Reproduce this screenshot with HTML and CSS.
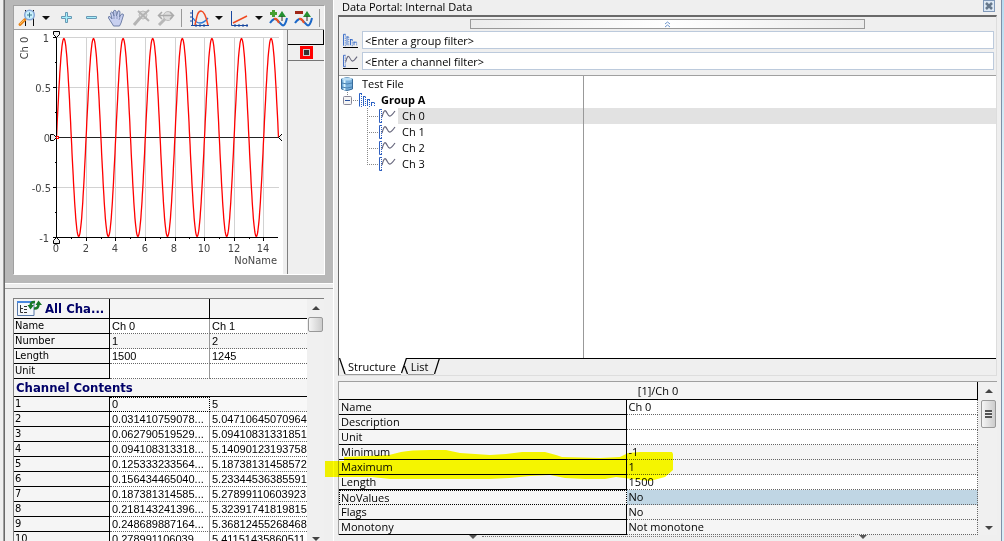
FILE: index.html
```html
<!DOCTYPE html>
<html lang="en">
<head>
<meta charset="utf-8">
<title>Data Portal: Internal Data</title>
<link rel="stylesheet" href="styles.css">
</head>
<body>
<svg class="defs" aria-hidden="true">
  <symbol id="channel" viewBox="0 0 17 16">
    <path d="M3 1.5H.5V14.500H3" fill="none" stroke="#3060c0"/>
    <path d="M2.500 3V14" stroke="#3060c0" stroke-dasharray="1 1"/>
    <path d="M3 9C5 2 6 1 8 5S11 10 16 3" fill="none" stroke="#66667c" stroke-width="1.200"/>
  </symbol>
  <symbol id="group" viewBox="0 0 17 16">
    <path d="M3 1.500H.5V14.500M4 4.500H6.500M8 7.500H11M12 10.500H15.500M4.500 4V14M8.500 7V14M12.500 10V14" fill="none" stroke="#2860c4"/>
    <path d="M2.500 2V15M6.500 5V15M10.500 8V15M15.500 11V15" stroke="#2860c4" stroke-dasharray="1 1"/>
  </symbol>
</svg>
<div class="app">
  <section class="left">
    <div class="chart-zone">
      <div class="chart-card">
        <div class="toolbar">
          <button class="tool" aria-label="Zoom"><svg viewBox="14 6 25 22"><path d="M25.500 9V25M33.500 9V25" stroke="#111"/><path d="M20 23.500L25 18.500" stroke="#e88418" stroke-width="3" stroke-linecap="round"/><path d="M20 23L24 19" stroke="#ffc060"/><circle cx="29.500" cy="14" r="4.800" fill="#c8f0fc" stroke="#88a8d8" stroke-width="1.500"/><path d="M27 14H32M29.500 11.500V16.500" stroke="#3c7890"/></svg></button>
          <button class="caret" aria-label="Zoom options"></button>
          <button class="tool" aria-label="Zoom in"><svg viewBox="54 6 25 22"><path d="M65.500 11.500h2v4h4v2h-4v4h-2v-4h-4v-2h4z" fill="#a4f0fc" stroke="#6898b4"/></svg></button>
          <button class="tool" aria-label="Zoom out"><svg viewBox="79 6 25 22"><path d="M86.500 15.500h10v2h-10z" fill="#a4f0fc" stroke="#6898b4"/></svg></button>
          <button class="tool" aria-label="Pan"><svg viewBox="104 6 25 22"><path d="M113 24L108.500 17Q108 15 110 15.500L112 18L110.500 12Q111.500 10 113 12L114 15L113.500 10Q115 8.500 116 10L116.500 15L118 10Q119.500 9 120 11L119.500 16L121.500 13Q123.500 12.500 123.500 14L121 22L119.500 25H113.500Z" fill="#c8d0f0" stroke="#7080a8"/><path d="M114 15V18M117 15V18M120 16L119 19" stroke="#8c98c0"/></svg></button>
          <button class="tool" aria-label="Clear zoom"><svg viewBox="129 6 25 22"><path d="M134 24L140 17" stroke="#b4b4b4" stroke-width="3"/><circle cx="143" cy="14" r="4" fill="#ddd" stroke="#bbb"/><path d="M138 10L149 20M149 9L138 19" stroke="#b4b4b4" stroke-width="2"/></svg></button>
          <button class="tool" aria-label="Fit"><svg viewBox="154 6 25 22"><path d="M159 24L165 18" stroke="#b8b8b8" stroke-width="3"/><circle cx="168" cy="15" r="4.500" fill="#ddd" stroke="#bbb"/><path d="M159 14.500H173M162 11L158.500 14.500L162 18M170 11L173.500 14.500L170 18" fill="none" stroke="#aaa" stroke-width="1.500"/></svg></button>
          <span class="sep"></span>
          <button class="tool" aria-label="Curve"><svg viewBox="187 6 25 22"><path d="M191 24.500H209M192.500 9V25M196 23v3M200 23v3M204 23v3M190 12h3M190 16h3M190 20h3" stroke="#1848a0"/><path d="M193 17Q196 22 200 22T208 17" fill="none" stroke="#2878d8" stroke-width="1.300"/><path d="M195 24C197 14 198 10 201 10S206 15 208 24" fill="none" stroke="#f04820" stroke-width="1.500"/></svg></button>
          <button class="caret gap" aria-label="Curve options"></button>
          <button class="tool" aria-label="Axes"><svg viewBox="227 6 25 22"><path d="M231.500 10V24.500H248M235 23v3M239 23v3M243 23v3M247 23v3" fill="none" stroke="#1848a0"/><path d="M233 22L247 15" stroke="#f04820" stroke-width="1.500"/></svg></button>
          <button class="caret gap" aria-label="Axes options"></button>
          <button class="tool" aria-label="Add curve"><svg viewBox="267 6 25 22"><path d="M270 22Q274 16 277 19T282 24Q285 26 287 17" fill="none" stroke="#1c68c8" stroke-width="2"/><path d="M274 18Q277 17 279 22" fill="none" stroke="#f05020" stroke-width="2"/><path d="M278 16L282 10L286 16Z" fill="#249030"/><path d="M282 15V20" stroke="#333"/><path d="M273.500 9V16M270 12.500H277" stroke="#48a030" stroke-width="3"/></svg></button>
          <button class="tool" aria-label="Remove curve"><svg viewBox="292 6 25 22"><path d="M295 22Q299 16 302 19T307 24Q310 26 312 17" fill="none" stroke="#1c68c8" stroke-width="2"/><path d="M299 18Q302 17 304 22" fill="none" stroke="#f05020" stroke-width="2"/><path d="M303 16L307 10L311 16Z" fill="#249030"/><path d="M307 15V20" stroke="#333"/><path d="M295 11.500H303" stroke="#a02818" stroke-width="3"/></svg></button>
          <span class="sep"></span>
        </div>
        <div class="chart-body">
          <svg class="plot" id="plot" viewBox="14 30 269 244" role="img" aria-label="Ch 0 sine curve">
            <path d="M57 37.500H279M57 87.500H279M57 187.500H279M86.500 38V237M115.500 38V237M145.500 38V237M175.500 38V237M204.500 38V237M234.500 38V237M263.500 38V237" stroke="#d2d2d2" shape-rendering="crispEdges"/>
            <path d="M56 137.500H279" stroke="#222" shape-rendering="crispEdges"/>
            <polyline id="curve" fill="none" stroke="#f00" stroke-width="1.300"/>
            <path d="M56.500 37V238M53 37.500H57M53 87.500H57M53 137.500H57M53 187.500H57M53 237.500H278M55 62.500H57M55 112.500H57M55 162.500H57M55 212.500H57M86.500 238V241M115.500 238V241M145.500 238V241M175.500 238V241M204.500 238V241M234.500 238V241M263.500 238V241M71.500 238V239M101.500 238V239M130.500 238V239M160.500 238V239M189.500 238V239M219.500 238V239M249.500 238V239" stroke="#000" shape-rendering="crispEdges"/>
            <path d="M53.500 31.500H59.500V34.500L56.500 37.500L53.500 34.500ZM53.500 243.500H59.500V240.500L56.500 237.500L53.500 240.500ZM50.500 134.500H53.500L56.500 137.500L53.500 140.500H50.500ZM282 134L278.500 137.500L282 141" fill="#eee" stroke="#000"/>
            <rect x="56.500" y="136.500" width="2" height="2" fill="#fff" stroke="#f00"/>
            <g class="end"><text x="49" y="42">1</text><text x="51" y="92">0.5</text><text x="50" y="142">0</text><text x="51" y="192">-0.5</text><text x="49" y="242">-1</text><text x="277" y="264">NoName</text></g>
            <g class="mid"><text x="56" y="252">0</text><text x="86" y="252">2</text><text x="115" y="252">4</text><text x="145" y="252">6</text><text x="174" y="252">8</text><text x="204" y="252">10</text><text x="234" y="252">12</text><text x="263" y="252">14</text><text transform="translate(28 48) rotate(-90)">Ch 0</text></g>
          </svg>
          <div class="legend"><div class="legend-head"></div><div class="legend-row"><span class="swatch"></span></div></div>
        </div>
      </div>
    </div>
    <div class="grid-zone">
      <div class="grid-frame">
        <table class="channels">
          <colgroup><col class="c1"><col class="c2"><col></colgroup>
          <tbody>
          <tr class="head"><th><span class="title"><svg width="26" height="18" viewBox="16 299 26 18"><path d="M17.500 301.500H34V315.500H17.500Z" fill="#f4f8fc" stroke="#5878a8"/><path d="M17 302H34" stroke="#4888e0" stroke-width="2"/><path d="M20.500 305V312.500H23M20.500 308.500H23M24 306.500H27M24 309.500H27M24 312.500H27" fill="none" stroke="#333"/><path d="M30.500 307Q30 301.500 35 302" fill="none" stroke="#187828" stroke-width="2.500"/><path d="M27.500 305H34L30.500 309.500ZM35.500 305H42L38.500 300.500Z" fill="#187828"/><path d="M38.500 303Q39 309 34 308.500" fill="none" stroke="#187828" stroke-width="2.500"/></svg>All Cha...</span></th><th></th><th></th></tr>
          <tr><th>Name</th><td>Ch 0</td><td>Ch 1</td></tr>
          <tr class="ro"><th>Number</th><td>1</td><td>2</td></tr>
          <tr><th>Length</th><td>1500</td><td>1245</td></tr>
          <tr><th>Unit</th><td></td><td></td></tr>
          <tr class="section"><th colspan="3">Channel Contents</th></tr>
          <tr class="focus"><th>1</th><td>0</td><td>5</td></tr>
          <tr><th>2</th><td>0.031410759078...</td><td>5.04710645070964</td></tr>
          <tr><th>3</th><td>0.062790519529...</td><td>5.09410831331851</td></tr>
          <tr><th>4</th><td>0.094108313318...</td><td>5.14090123193758</td></tr>
          <tr><th>5</th><td>0.125333233564...</td><td>5.18738131458572</td></tr>
          <tr><th>6</th><td>0.156434465040...</td><td>5.23344536385591</td></tr>
          <tr><th>7</th><td>0.187381314585...</td><td>5.27899110603923</td></tr>
          <tr><th>8</th><td>0.218143241396...</td><td>5.32391741819815</td></tr>
          <tr><th>9</th><td>0.248689887164...</td><td>5.36812455268468</td></tr>
          <tr><th>10</th><td>0.278991106039...</td><td>5.41151435860511</td></tr>
          </tbody>
        </table>
        <div class="scroll"><span class="up"></span><span class="thumb small"></span><span class="down"></span></div>
      </div>
    </div>
  </section>

  <section class="portal">
    <header class="portal-title"><span>Data Portal: Internal Data</span><button class="close" aria-label="Close"><svg width="12" height="12" viewBox="0 0 12 12"><path d="M3 3L9 9M9 3L3 9" stroke="#66788c" stroke-width="2.500"/></svg></button></header>
    <div class="browser">
      <button class="collapse" aria-label="Collapse filters"><svg width="7" height="7" viewBox="0 0 7 7"><path d="M1 3L3.500 1L6 3M1 6L3.500 4L6 6" fill="none" stroke="#6c94cc"/></svg></button>
      <div class="filters">
        <label class="filter"><span class="ficon"><svg width="15" height="14"><use href="#group"/></svg></span><input aria-label="Group filter" value="&lt;Enter a group filter&gt;"></label>
        <label class="filter"><span class="ficon"><svg width="15" height="14"><use href="#channel"/></svg></span><input aria-label="Channel filter" value="&lt;Enter a channel filter&gt;"></label>
      </div>
      <div class="tree-area">
        <ul class="tree">
          <li><svg width="23" height="16" viewBox="339 76 23 16"><path d="M341.500 79V89Q347 92 352.500 89V79Q347 76 341.500 79Z" fill="#78b0dc" stroke="#386c9c"/><path d="M344.500 80V90" stroke="#d8f4ff" stroke-width="2"/><ellipse cx="347" cy="79" rx="5" ry="1.500" fill="#b8dcf4"/><path d="M342 83Q347 85 352 83M342 87Q347 89 352 87" fill="none" stroke="#4880b0"/></svg>Test File</li>
          <li class="bold"><svg width="42" height="16" viewBox="339 92 42 16"><path d="M347.500 92V96M353 100.500H358" stroke="#888" stroke-dasharray="1 1"/><rect x="343.500" y="96.500" width="8" height="8" rx="1" fill="#f4f4f4" stroke="#889"/><path d="M345 100.500H350" stroke="#2850a0"/><use href="#group" x="359" y="92" width="17" height="16"/></svg>Group A</li>
          <li class="leaf"><svg width="31" height="16"><path d="M.5 0V16M0 8.500H12" stroke="#888" stroke-dasharray="1 1"/><use href="#channel" x="12" y="0" width="17" height="16"/></svg><span class="picked">Ch 0</span></li>
          <li class="leaf"><svg width="31" height="16"><path d="M.5 0V16M0 8.500H12" stroke="#888" stroke-dasharray="1 1"/><use href="#channel" x="12" y="0" width="17" height="16"/></svg><span>Ch 1</span></li>
          <li class="leaf"><svg width="31" height="16"><path d="M.5 0V16M0 8.500H12" stroke="#888" stroke-dasharray="1 1"/><use href="#channel" x="12" y="0" width="17" height="16"/></svg><span>Ch 2</span></li>
          <li class="leaf"><svg width="31" height="16"><path d="M.5 0V9M0 8.500H12" stroke="#888" stroke-dasharray="1 1"/><use href="#channel" x="12" y="0" width="17" height="16"/></svg><span>Ch 3</span></li>
        </ul>
        <span class="divider"></span>
      </div>
      <div class="tabs">
        <svg width="8" height="17"><path d="M0 0H8V17H6Z" fill="#fff"/><path d="M.5 0L6 16" stroke="#000" stroke-width="1.200"/><path d="M6 16.500H8" stroke="#999"/></svg>
        <button class="tab on">Structure</button>
        <svg width="7" height="17"><path d="M0 0H5L0 16Z" fill="#fff"/><path d="M5 .5H7M5.500 0L.5 15M3.500 8L6.500 16" stroke="#000" stroke-width="1.200"/></svg>
        <button class="tab">List</button>
        <svg width="6" height="17"><path d="M0 .5H6M5.500 0L.5 16" stroke="#000" stroke-width="1.200"/></svg>
        <span class="rest"></span>
      </div>
    </div>
    <div class="props-frame">
      <table class="props">
        <colgroup><col class="pname"><col></colgroup>
        <thead><tr><th colspan="2">[1]/Ch 0</th></tr></thead>
        <tbody>
        <tr><th>Name</th><td>Ch 0</td></tr>
        <tr><th>Description</th><td></td></tr>
        <tr><th>Unit</th><td></td></tr>
        <tr class="ro"><th>Minimum</th><td>-1</td></tr>
        <tr class="ro"><th>Maximum</th><td>1</td></tr>
        <tr><th>Length</th><td>1500</td></tr>
        <tr class="sel"><th>NoValues</th><td>No</td></tr>
        <tr class="ro"><th>Flags</th><td>No</td></tr>
        <tr class="ro"><th>Monotony</th><td>Not monotone</td></tr>
        </tbody>
      </table>
      <div class="scroll"><span class="up"></span><span class="thumb grip"></span><span class="down"></span></div>
      <svg class="marker" viewBox="325 449 348 33" width="348" height="33" aria-hidden="true"><path d="M325 461H344V457L389 455L401 452Q410 450 430 450H446L460 453L490 455L506 454L522 452H545L556 455L562 457L600 458L620 457L628 453L640 452H672L673 454V470L665 477L650 481L640 480L616 477L605 479H585L565 478L550 475L530 476L510 478L490 479H390L372 477H325Z" fill="#ffff00"/></svg>
    </div>
    <footer class="split"><span class="arrow"></span><span class="dots"></span><span class="arrow"></span></footer>
  </section>
  <div class="edge"></div>
</div>
<script src="chart.js"></script>
</body>
</html>
```
FILE: chart.js
```js
// Ch 0 is a sine with a period of 2 over the range 0 to 15.
const points = [];
for (let i = 0; i <= 600; i++) {
  const t = i / 40;
  points.push((56.5 + t * 14.8).toFixed(1) + "," + (137.5 - 99 * Math.sin(Math.PI * t)).toFixed(1));
}
document.getElementById("curve").setAttribute("points", points.join(" "));
```
FILE: styles.css
```css
* { box-sizing: border-box; }
body { margin: 0; background: #efefef; color: #000; font: 11px/14px "DejaVu Sans Condensed", "DejaVu Sans", sans-serif; overflow: hidden; }
button { border: 0; margin: 0; padding: 0; background: none; font: inherit; color: inherit; }
svg { display: block; flex: none; }
.defs { position: absolute; width: 0; height: 0; }
.app { display: grid; grid-template-columns: 333px minmax(0, 1fr) 3px; height: 100vh; }

.left { display: flex; flex-direction: column; min-height: 0; margin-left: 3px; border-left: 1px solid #a0a0a0; box-shadow: inset 1px 0 #696969; padding-left: 1px; }
.chart-zone { background: #b8b8b8; padding: 5px 8px 8px; border-bottom: 1px solid #fff; }
.chart-card { border: 1px solid #a0a0a0; border-right-color: #fff; border-bottom-color: #fff; background: #efefef; }
.toolbar { display: flex; align-items: center; height: 24px; border-bottom: 1px solid #a0a0a0; }
.tool { width: 25px; height: 22px; flex: none; }
.tool svg { width: 25px; height: 22px; }
.caret { width: 13px; height: 22px; margin-right: 2px; flex: none; display: flex; align-items: center; justify-content: center; }
.caret::before { content: ""; border: 4px solid transparent; border-top-color: #111; border-bottom: 0; }
.sep { width: 1px; height: 18px; background: #999; margin: 0 5px 0 2px; flex: none; }
.chart-body { display: flex; }
.plot { flex: 1; min-width: 0; background: #fff; }
.plot text { fill: #444; }
.end { text-anchor: end; }
.mid { text-anchor: middle; }
.legend { width: 37px; margin-left: 4px; border-left: 1px solid #808080; flex: none; }
.legend-head { height: 15px; border-right: 1px solid #000; border-bottom: 1px solid #000; }
.legend-row { height: 16px; border-bottom: 1px solid #777; display: flex; align-items: center; justify-content: center; }
.swatch { width: 13px; height: 13px; background: #333; border: 3px solid #f00; outline: 1px solid #ccc; outline-offset: -4px; }

.grid-zone { flex: 1; min-height: 0; margin-top: 4px; border-top: 1px solid #a0a0a0; padding: 9px 9px 0 8px; }
.grid-frame { display: flex; height: 100%; overflow: hidden; border-top: 1px solid #808080; border-left: 1px solid #808080; }
table { border-collapse: separate; border-spacing: 0; table-layout: fixed; }
th, td { text-align: left; font-weight: normal; padding: 0 2px; height: 15px; line-height: 14px; white-space: nowrap; overflow: hidden; }
th { background: #f5f5f5; border-bottom: 1px solid #000; border-right: 1px solid #000; padding-left: 1px; }
td { background: #fff; border-bottom: 1px dotted #666; }
.ro td { background: #f5f5f5; }
.channels { width: 293px; align-self: flex-start; }
.c1 { width: 96px; }
.c2 { width: 100px; }
.channels td { font-family: "Liberation Sans", sans-serif; }
.channels td:nth-child(2) { border-right: 1px solid #999; }
.channels td:last-child, .channels .head th:last-child { border-right: 0; }
.channels td:last-child { padding-right: 0; }
.channels .head th { height: 20px; line-height: 19px; }
.channels .section th { font-weight: bold; font-size: 13px; color: #000068; }
.title { display: flex; gap: 3px; padding-left: 1px; font-size: 13px; font-weight: bold; color: #000068; }
.channels .section th { height: 18px; line-height: 17px; border-right: 0; padding-left: 2px; }
.channels .focus td { background: #f8f8f8; }
.channels .focus td:nth-child(2) { border: 1px dotted #000; border-left: 0; line-height: 13px; }

.scroll { display: flex; flex-direction: column; align-items: center; width: 17px; flex: none; background: #f0f0f0; padding: 7px 0 5px; }
.up { border: 4px solid transparent; border-bottom-color: #444; border-top: 0; }
.down { border: 4px solid transparent; border-top-color: #444; border-bottom: 0; margin-top: auto; }
.grid-frame .scroll { padding-bottom: 0; }
.thumb { width: 15px; height: 28px; margin-top: 7px; border: 1px solid #999; border-radius: 2px; background: linear-gradient(90deg, #f5f5f5, #ccc); display: flex; align-items: center; justify-content: center; }
.thumb.small { height: 15px; }
.grip::before { content: ""; width: 7px; height: 8px; background: repeating-linear-gradient(#555 0 2px, #eee 2px 3px); }

.portal { display: flex; flex-direction: column; min-width: 0; min-height: 0; padding: 0 4px 0 5px; border-left: 1px solid #fff; font: 11px/14px "Open Sans", "Noto Sans", sans-serif; }
.portal-title { display: flex; justify-content: space-between; height: 15px; padding: 0 2px 0 3px; line-height: 13px; }
.close { width: 12px; height: 12px; border: 1px solid #8098b8; background: #dce8f4; display: flex; align-items: center; justify-content: center; flex: none; }
.browser { flex: 1; min-height: 0; display: flex; flex-direction: column; border: 1px solid #696969; border-top-width: 2px; border-right-color: #ddd; border-bottom-color: #ddd; margin-left: -1px; }
.collapse { width: 60%; height: 10px; margin: 2px auto 2px; border: 1px solid #999; background: linear-gradient(90deg, #ececec, #fff, #ececec); display: flex; align-items: center; justify-content: center; flex: none; }
.filters { display: flex; flex-direction: column; gap: 3px; padding: 0 2px 5px 4px; flex: none; }
.filter { display: flex; align-items: center; gap: 4px; }
.ficon { border-bottom: 1px solid #000; }
.filter input { flex: 1; min-width: 0; height: 18px; border: 1px solid #bccadc; padding: 0 2px; background: #fff; font: inherit; color: #000; }
.tree-area { flex: 1; min-height: 0; display: grid; border-top: 1px solid #a0a0a0; background: #fff; }
.tree, .divider { grid-area: 1 / 1; }
.tree { list-style: none; margin: 0; padding: 0; }
.tree li { display: flex; height: 16px; line-height: 16px; }
.tree .bold { font-weight: bold; }
.tree .leaf { padding-left: 28px; }
.leaf span { flex: 1; padding-left: 4px; }
.leaf .picked { background: #e2e2e2; }
.divider { margin-left: 244px; border-left: 1px solid #999; pointer-events: none; }
.tabs { display: flex; height: 17px; flex: none; }
.tab { border-top: 1px solid #000; border-bottom: 1px solid #999; padding: 0 5px 0 3px; line-height: 15px; }
.tab.on { background: #fff; border-top-color: #fff; padding: 0 5px 0 1px; }
.rest { flex: 1; border-top: 1px solid #000; }

.props-frame { position: relative; display: flex; flex: none; margin: 5px 0 0 -1px; border-top: 1px solid #a0a0a0; border-left: 1px solid #a0a0a0; }
.props { flex: 1; min-width: 0; margin-right: 2px; }
.pname { width: 45%; }
.props thead th { height: 18px; line-height: 17px; text-align: center; }
.props th { padding-left: 2px; }
.props td { border-right: 1px dotted #666; }
.props .sel th { border: 1px dotted #000; line-height: 13px; padding-left: 1px; }
.props .sel td { background: #c0d6e4; }
.marker { position: absolute; left: -14px; top: 67px; mix-blend-mode: multiply; pointer-events: none; }
.split { display: flex; align-items: flex-start; gap: 5px; height: 6px; flex: none; margin: 0 130px; border-bottom: 0; }
.split .arrow { border: 4px solid transparent; border-top-color: #555; border-bottom: 0; }
.dots { flex: 1; border-top: 1px dotted #777; margin-top: 1px; }
.edge { border-left: 1px solid #8090a8; background: linear-gradient(#b8dcf0, #e4f4fa 35%, #d8eef6); }
```
